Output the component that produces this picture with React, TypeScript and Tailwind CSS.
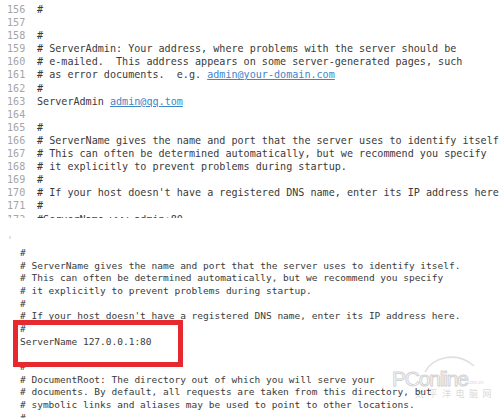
import { memo } from "react";

// Apache httpd.conf snippet: top editor view with line numbers, bottom plain text with highlight box

interface Line {
  no?: number;
  parts: (string | { link: string })[];
}

const topLines: Line[] = [
  { no: 156, parts: ["#"] },
  { no: 157, parts: [""] },
  { no: 158, parts: ["#"] },
  { no: 159, parts: ["# ServerAdmin: Your address, where problems with the server should be"] },
  { no: 160, parts: ["# e-mailed.  This address appears on some server-generated pages, such"] },
  { no: 161, parts: ["# as error documents.  e.g. ", { link: "admin@your-domain.com" }] },
  { no: 162, parts: ["#"] },
  { no: 163, parts: ["ServerAdmin ", { link: "admin@qq.tom" }] },
  { no: 164, parts: [""] },
  { no: 165, parts: ["#"] },
  { no: 166, parts: ["# ServerName gives the name and port that the server uses to identify itself."] },
  { no: 167, parts: ["# This can often be determined automatically, but we recommend you specify"] },
  { no: 168, parts: ["# it explicitly to prevent problems during startup."] },
  { no: 169, parts: ["#"] },
  { no: 170, parts: ["# If your host doesn't have a registered DNS name, enter its IP address here."] },
  { no: 171, parts: ["#"] },
  { no: 172, parts: ["#ServerName www.admin:80"] },
];

const bottomLines: string[] = [
  "#",
  "# ServerName gives the name and port that the server uses to identify itself.",
  "# This can often be determined automatically, but we recommend you specify",
  "# it explicitly to prevent problems during startup.",
  "#",
  "# If your host doesn't have a registered DNS name, enter its IP address here.",
  "#",
  "ServerName 127.0.0.1:80",
  "",
  "#",
  "# DocumentRoot: The directory out of which you will serve your",
  "# documents. By default, all requests are taken from this directory, but",
  "# symbolic links and aliases may be used to point to other locations.",
  "#",
];

// faint PConline watermark, drawn under the text
const Watermark = () => (
  <div className="absolute left-[390px] top-[350px] w-[110px] h-[52px] pointer-events-none">
    <svg className="absolute left-[32px] top-[2px]" width="56" height="24" viewBox="0 0 56 24">
      <path d="M3 20 C 10 6, 34 -2, 52 14" fill="none" stroke="#e0e0e0" strokeWidth="1.6" />
    </svg>
    <div className="absolute left-[2px] top-[18px] text-[21px] leading-none tracking-[-1.2px] whitespace-nowrap text-white font-['Liberation_Sans',sans-serif] [-webkit-text-stroke:1px_#d3d3d3]">
      PConline
    </div>
    <div className="absolute left-[76px] top-[30px] text-[5px] leading-none whitespace-nowrap text-[#d8d8d8] font-['Liberation_Sans',sans-serif]">
      .com.cn
    </div>
    <div className="absolute left-[25px] top-[39px] text-[9px] leading-none tracking-[4.5px] whitespace-nowrap text-[#dadada] font-['Noto_Sans_CJK_SC',sans-serif]">
      太平洋电脑网
    </div>
  </div>
);

const App = memo(() => {
  return (
    <div className="relative w-[500px] h-[418px] overflow-hidden bg-white font-['DejaVu_Sans_Mono','Liberation_Mono',monospace] text-[#3a3a3a]">
      <Watermark />

      {/* Top editor view */}
      <div className="relative h-[218px] overflow-hidden pt-[3px]">
        {topLines.map((line) => (
          <div key={line.no} className="flex h-[13.1px] items-center text-[10.1px] leading-[13.1px] whitespace-pre">
            <span className="w-[37px] shrink-0 pl-[7px] text-[#a5a5a5]">{line.no}</span>
            <span>
              {line.parts.map((p, i) =>
                typeof p === "string" ? (
                  <span key={i}>{p}</span>
                ) : (
                  <span key={i} className="text-[#3f86c8] underline">
                    {p.link}
                  </span>
                )
              )}
            </span>
          </div>
        ))}
      </div>

      {/* Gap between the two shots */}
      <div className="h-[29px] pl-[9px] pt-[18px]">
        <div className="w-[2px] h-[3px] bg-[#e4e4e4]" />
      </div>

      {/* Bottom plain view */}
      <div className="relative pl-[20px]">
        {bottomLines.map((text, i) => (
          <div key={i} className="h-[12.67px] text-[9.5px] leading-[12.67px] whitespace-pre">
            {text}
          </div>
        ))}
        <div className="absolute left-[13px] top-[73px] w-[170px] h-[47px] border-[5px] border-[#e5292f]" />
      </div>
    </div>
  );
});

App.displayName = "App";

export default App;
